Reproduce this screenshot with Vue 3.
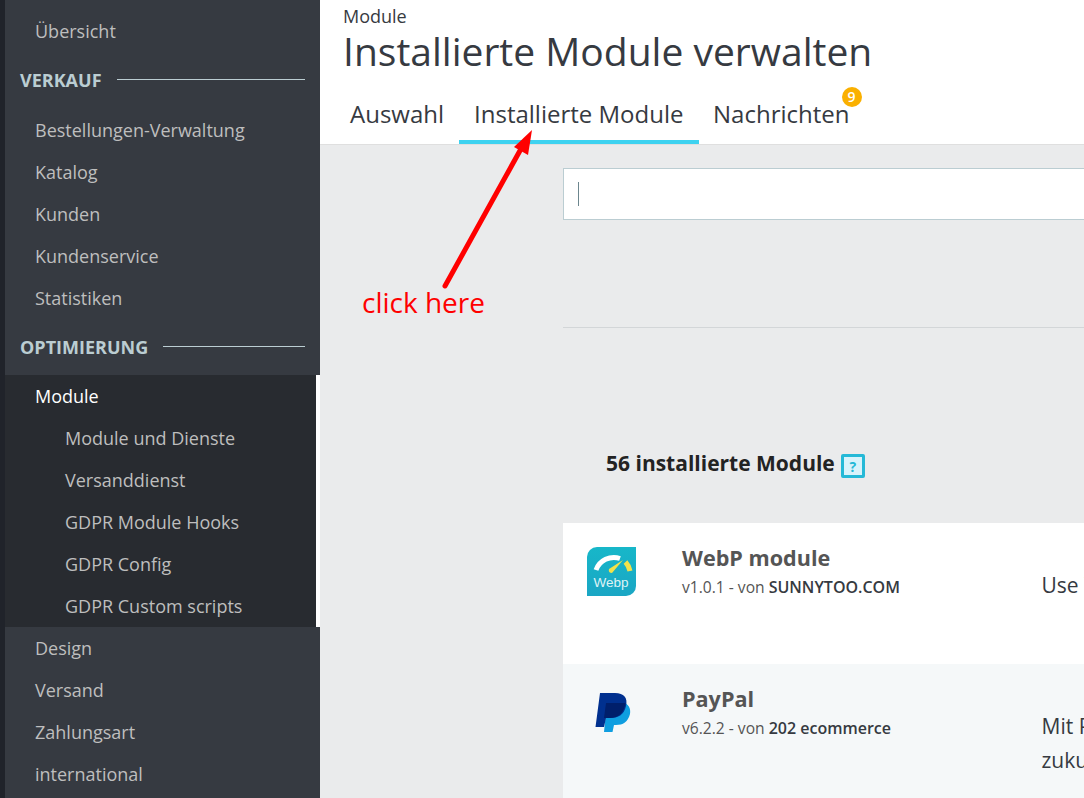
<script setup>
const topItems = ['Bestellungen-Verwaltung', 'Katalog', 'Kunden', 'Kundenservice', 'Statistiken']
const subItems = ['Module und Dienste', 'Versanddienst', 'GDPR Module Hooks', 'GDPR Config', 'GDPR Custom scripts']
const lowItems = ['Design', 'Versand', 'Zahlungsart', 'international']
</script>

<template>
  <div class="app">
    <aside class="sidebar">
      <div class="item first">Übersicht</div>
      <div class="heading heading-a"><span>VERKAUF</span><i></i></div>
      <div v-for="t in topItems" :key="t" class="item">{{ t }}</div>
      <div class="heading heading-b"><span>OPTIMIERUNG</span><i></i></div>
      <div class="active-group">
        <div class="item current">Module</div>
        <div v-for="t in subItems" :key="t" class="item sub">{{ t }}</div>
      </div>
      <div v-for="t in lowItems" :key="t" class="item">{{ t }}</div>
    </aside>

    <main class="main">
      <header class="head">
        <div class="crumb">Module</div>
        <h1 class="title">Installierte Module verwalten</h1>
        <nav class="tabs">
          <div class="tab">Auswahl</div>
          <div class="tab active">Installierte Module</div>
          <div class="tab notif">Nachrichten<span class="badge">9</span></div>
        </nav>
      </header>

      <section class="content">
        <div class="search"><span class="caret"></span></div>
        <div class="rule"></div>
        <div class="count">
          <span>56 installierte Module</span>
          <span class="help">?</span>
        </div>

        <article class="row row-white">
          <div class="logo">
            <svg class="webp" width="49" height="49" viewBox="0 0 49 49">
              <defs>
                <linearGradient id="wg" x1="0" y1="0" x2="0" y2="1">
                  <stop offset="0" stop-color="#17b7c9" />
                  <stop offset="1" stop-color="#1aa6c4" />
                </linearGradient>
              </defs>
              <path d="M10 0H49V39a10 10 0 0 1-10 10H0V10A10 10 0 0 1 10 0Z" fill="url(#wg)" />
              <path d="M9 23A19 19 0 0 1 33 11.500" fill="none" stroke="#fff" stroke-width="5" />
              <path d="M38.500 15A19 19 0 0 1 43 24" fill="none" stroke="#f3e24a" stroke-width="5" />
              <path d="M36 13 L22 22 Q21 26 25 26Z" fill="#f3e24a" />
              <text x="24" y="40" text-anchor="middle" class="webp-text">Webp</text>
            </svg>
          </div>
          <div class="info">
            <div class="name">WebP module</div>
            <div class="meta">v1.0.1 - von <b>SUNNYTOO.COM</b></div>
          </div>
          <div class="desc desc-a">Use WebP images to speed up your store and improve its performance</div>
        </article>

        <article class="row row-tint">
          <div class="logo">
            <svg width="49" height="49" viewBox="0 0 49 49">
              <path d="M20 14 H34 C42 15 44 21 43 26 C41 34 36 37 29 37 H27 L25.500 44 H17Z" fill="#0f9ee0" />
              <path d="M13 5 H28 C37 5 41 10 39 18 C37 27 31 30 23 30 H19 L17 39 H8.500Z" fill="#00308f" />
              <path d="M19 15 H38.500 C37 25 31 30 23 30 H17Z" fill="#001f6b" />
            </svg>
          </div>
          <div class="info">
            <div class="name">PayPal</div>
            <div class="meta">v6.2.2 - von <b>202 ecommerce</b></div>
          </div>
          <div class="desc desc-b">Mit PayPal bieten Sie Ihren Kunden eine schnelle Zahlung<br />zukunftssicher und weltweit anerkannt für Ihren Shop</div>
        </article>
      </section>
    </main>

    <svg class="arrow" width="1084" height="798" viewBox="0 0 1084 798">
      <line x1="445" y1="286" x2="522" y2="147" stroke="#ff0000" stroke-width="5" stroke-linecap="round" />
      <path d="M532 130 L514 147 L528 155Z" fill="#ff0000" />
    </svg>
    <div class="note">click here</div>
  </div>
</template>

<style>
html, body { margin: 0; padding: 0; }
body { overflow: hidden; }
</style>

<style scoped>
.app {
  position: relative;
  display: flex;
  width: 1084px;
  height: 798px;
  overflow: hidden;
  background: #eaebec;
  font-family: "Open Sans", "Noto Sans", sans-serif;
  color: #363a41;
}
.sidebar {
  flex: 0 0 320px;
  box-sizing: border-box;
  height: 798px;
  overflow: hidden;
  padding-top: 10px;
  background: #363a41;
  border-left: 5px solid #20232a;
}
.item {
  height: 42px;
  line-height: 42px;
  padding-left: 30px;
  font-size: 18px;
  color: #bebebe;
  white-space: nowrap;
}
.heading {
  display: flex;
  align-items: center;
  gap: 15px;
  padding: 0 15px;
  font-size: 18px;
  font-weight: 700;
  color: #bbcdd2;
}
.heading-a {
  box-sizing: border-box;
  height: 57px;
  padding-bottom: 1px;
}
.heading-b { height: 56px; }
.heading i {
  flex: 1;
  height: 1px;
  margin-top: -2px;
  background: #bbcdd2;
}
.active-group {
  background: #282b30;
  border-right: 4px solid #fff;
}
.item.current { color: #fff; }
.item.sub { padding-left: 60px; }

.main {
  flex: 1;
  min-width: 0;
  display: flex;
  flex-direction: column;
}
.head {
  flex: 0 0 145px;
  box-sizing: border-box;
  height: 145px;
  padding: 6px 0 0 23px;
  background: #fff;
  border-bottom: 1px solid #dfdfdf;
}
.crumb {
  font-size: 18px;
  line-height: 21px;
}
.title {
  margin: 0 0 2px;
  font-size: 39px;
  font-weight: 400;
  line-height: 48px;
  white-space: nowrap;
}
.tabs {
  display: flex;
  margin: 0 0 0 -8px;
}
.tab {
  position: relative;
  box-sizing: border-box;
  height: 61px;
  margin-top: 6px;
  padding: 8px 15px 0;
  line-height: 46px;
  font-size: 24px;
  white-space: nowrap;
}
.tab.active {
  width: 240px;
  border-bottom: 4px solid #3ed2f0;
}
.tab.notif { margin-left: -1px; }
.badge {
  position: absolute;
  top: 4px;
  right: 3px;
  width: 20px;
  height: 20px;
  border-radius: 50%;
  background: #fab000;
  color: #fff;
  font-size: 14px;
  font-weight: 600;
  line-height: 20px;
  text-align: center;
}

.content {
  flex: 1;
  min-width: 0;
  padding: 23px 0 0 243px;
}
.search {
  box-sizing: border-box;
  display: flex;
  align-items: center;
  height: 52px;
  width: 700px;
  padding-left: 14px;
  background: #fff;
  border: 1px solid #bbcdd2;
}
.caret {
  width: 1px;
  height: 24px;
  background: #6c868e;
}
.rule {
  width: 700px;
  height: 1px;
  margin-top: 107px;
  background: #d3d6d8;
}
.count {
  display: flex;
  align-items: center;
  gap: 6px;
  height: 24px;
  margin: 126px 0 0 43px;
  font-size: 21px;
  font-weight: 700;
  line-height: 24px;
  color: #232323;
  white-space: nowrap;
}
.count > span:first-child { margin-top: -6px; }
.help {
  box-sizing: border-box;
  width: 24px;
  height: 24px;
  border: 3px solid #25b9d7;
  border-radius: 2px;
  background: #d9f3fb;
  color: #25b9d7;
  font-size: 14px;
  line-height: 19px;
  text-align: center;
}
.row {
  display: flex;
  width: 1000px;
  box-sizing: border-box;
  padding: 24px 0 0 24px;
}
.row-white {
  height: 141px;
  margin-top: 45px;
  background: #fff;
}
.row-tint {
  height: 140px;
  background: #f5f8f9;
}
.logo {
  flex: 0 0 95px;
  height: 49px;
}
.logo svg { display: block; }
.webp-text {
  font-family: "Liberation Sans", Arial, sans-serif;
  font-size: 13.500px;
  fill: #dff3f6;
}
.info {
  flex: 0 0 360px;
  margin-top: -4px;
}
.name {
  font-size: 21.600px;
  font-weight: 700;
  line-height: 30px;
  color: #555;
}
.meta {
  margin-top: 2px;
  font-size: 15.600px;
  line-height: 24px;
  color: #555;
  white-space: nowrap;
}
.meta b {
  font-size: 16px;
  font-weight: 600;
  color: #363a41;
}
.desc {
  margin-left: -0.500px;
  font-size: 21px;
  line-height: 34px;
  white-space: nowrap;
}
.desc-a { margin-top: 21px; }
.desc-b { margin-top: 21px; }

.arrow {
  position: absolute;
  top: 0;
  left: 0;
  pointer-events: none;
}
.note {
  position: absolute;
  left: 362px;
  top: 283px;
  font-size: 28px;
  line-height: 38px;
  color: #ff0000;
  white-space: nowrap;
}
</style>
